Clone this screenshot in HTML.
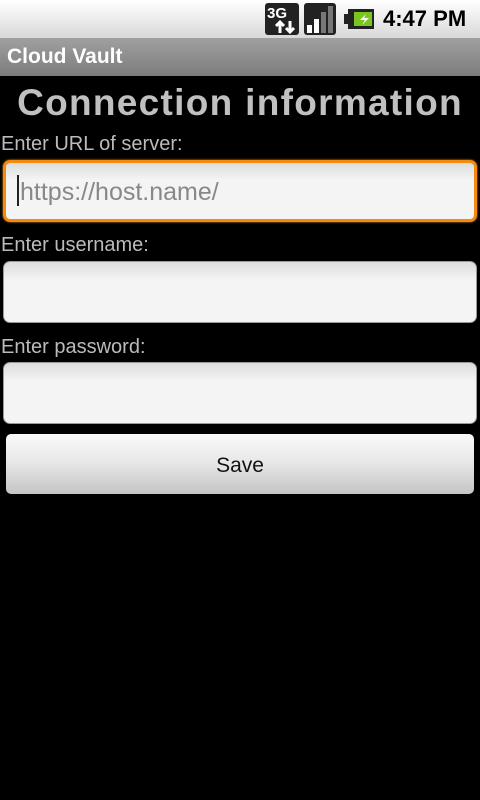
<!DOCTYPE html>
<html><head><style>
*{margin:0;padding:0;box-sizing:border-box}
body{width:480px;height:800px;background:#000;font-family:"Liberation Sans",sans-serif;position:relative;overflow:hidden}
.sb{position:absolute;top:0;left:0;width:480px;height:38px;background:linear-gradient(#fff,#d8d8d8)}
.tb{position:absolute;top:38px;left:0;width:480px;height:38px;background:linear-gradient(#a0a0a0,#7c7c7c);color:#fff;font-weight:bold;font-size:21px;line-height:38px;padding-left:7px}
.lbl{position:absolute;left:1px;color:#bbb;font-size:20px}
.in{position:absolute;left:3px;width:474px;height:62px;border-radius:7px;background:linear-gradient(#dcdcdc,#f4f4f4 30%,#f4f4f4);border:1px solid #999}
.btn{position:absolute;left:6px;top:434px;width:468px;height:60px;border-radius:5px;background:linear-gradient(#fafafa,#e6e6e6 50%,#c4c4c4);text-align:center;line-height:64px;font-size:21px;color:#111}
</style></head><body>
<div class="sb">
<svg style="position:absolute;left:265px;top:3px" width="34" height="32"><rect x="0" y="0" width="34" height="32" rx="3" fill="#222"/><text x="2" y="15" font-family="Liberation Sans" font-weight="bold" font-size="15" fill="#fff">3G</text><path d="M15 30V19M11 23l4-4 4 4M25 18v11M21 25l4 4 4-4" stroke="#fff" stroke-width="3" fill="none"/></svg>
<svg style="position:absolute;left:304px;top:3px" width="32" height="32"><rect width="32" height="32" rx="3" fill="#222"/><rect x="3" y="22" width="5" height="8" fill="#fff"/><rect x="10" y="16" width="5" height="14" fill="#fff"/><rect x="17" y="9" width="5" height="21" fill="#777"/><rect x="24" y="3" width="5" height="27" fill="#777"/></svg>
<svg style="position:absolute;left:342px;top:6px" width="34" height="26"><path d="M6 3h26v20H6v-5H2V8h4z" fill="#222"/><rect x="12" y="6" width="18" height="14" fill="#7ac51e"/><path d="M24 8l-6 6h5l-3 5 7-7h-5z" fill="#fff"/></svg>
<div style="position:absolute;left:383px;top:6px;font-size:22px;font-weight:bold;color:#000">4:47 PM</div>
</div>
<div class="tb">Cloud Vault</div>
<div style="position:absolute;top:82px;left:0;width:480px;text-align:center;font-size:37px;font-weight:bold;color:#c0c0c0;letter-spacing:1.3px">Connection information</div>
<div class="lbl" style="top:133px">Enter URL of server:</div>
<div class="in" style="top:160px;border:3px solid #f58a10;box-shadow:0 0 2px #f58a10"><div style="position:absolute;left:11px;top:12px;width:2px;height:31px;background:#222"></div><div style="position:absolute;left:14px;top:15px;font-size:25px;color:#888">https://host.name/</div></div>
<div class="lbl" style="top:234px">Enter username:</div>
<div class="in" style="top:261px"></div>
<div class="lbl" style="top:336px">Enter password:</div>
<div class="in" style="top:362px"></div>
<div class="btn">Save</div>
</body></html>
